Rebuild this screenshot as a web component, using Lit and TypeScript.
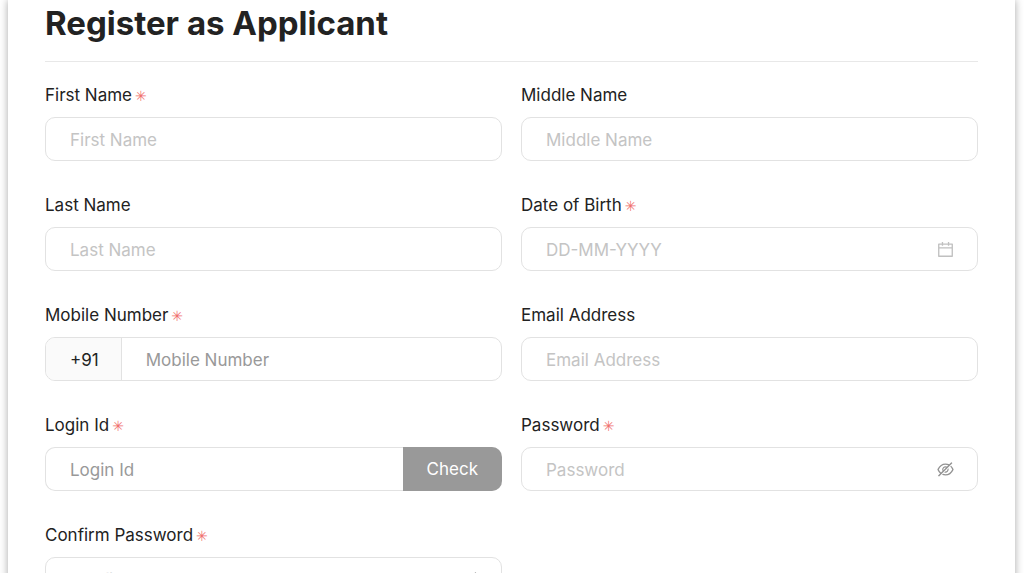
import { LitElement, html, css, svg, nothing } from "lit";
import { customElement, state } from "lit/decorators.js";

const calendarIcon = svg`<path d="M880 184H712v-64c0-4.4-3.6-8-8-8h-56c-4.4 0-8 3.6-8 8v64H384v-64c0-4.4-3.6-8-8-8h-56c-4.4 0-8 3.6-8 8v64H144c-17.7 0-32 14.3-32 32v664c0 17.7 14.3 32 32 32h736c17.7 0 32-14.3 32-32V216c0-17.7-14.3-32-32-32zm-40 656H184V460h656v380zM184 392V256h128v48c0 4.4 3.6 8 8 8h56c4.4 0 8-3.6 8-8v-48h256v48c0 4.4 3.6 8 8 8h56c4.4 0 8-3.6 8-8v-48h128v136H184z"/>`;

const eyeIcon = svg`<path d="M942.2 486.2Q889.47 375.11 816.7 305l-50.88 50.88C807.31 395.53 843.45 447.4 874.7 512 791.5 684.2 673.4 766 512 766q-72.67 0-133.87-22.38L323 798.75Q408 838 512 838q288.3 0 430.2-300.3a60.29 60.29 0 000-51.5zm-63.57-320.64L836 122.88a8 8 0 00-11.32 0L715.31 232.2Q624.86 186 512 186q-288.3 0-430.2 300.3a60.3 60.3 0 000 51.5q56.69 119.4 136.5 191.41L112.48 835a8 8 0 000 11.31L155.17 889a8 8 0 0011.31 0l712.15-712.12a8 8 0 000-11.32zM149.3 512C232.6 339.8 350.7 258 512 258c54.54 0 104.13 9.36 149.12 28.39l-70.3 70.3a176 176 0 00-238.13 238.13l-83.42 83.42C223.1 637.49 183.3 582.28 149.3 512zm246.7 0a112.11 112.11 0 01146.2-106.69L401.31 546.2A112 112 0 01396 512z"/><path d="M508 624c-3.46 0-6.87-.16-10.25-.47l-52.82 52.82a176.09 176.09 0 00227.42-227.42l-52.82 52.82c.31 3.38.47 6.79.47 10.25a111.94 111.94 0 01-112 112z"/>`;

interface Field {
  id: string;
  label: string;
  placeholder?: string;
  required?: boolean;
  kind?: "date" | "phone" | "check" | "password";
}

const fields: Field[] = [
  { id: "first-name", label: "First Name", required: true },
  { id: "middle-name", label: "Middle Name" },
  { id: "last-name", label: "Last Name" },
  { id: "dob", label: "Date of Birth", placeholder: "DD-MM-YYYY", required: true, kind: "date" },
  { id: "mobile", label: "Mobile Number", required: true, kind: "phone" },
  { id: "email", label: "Email Address" },
  { id: "login-id", label: "Login Id", required: true, kind: "check" },
  { id: "password", label: "Password", required: true, kind: "password" },
  { id: "confirm-password", label: "Confirm Password", required: true, kind: "password" },
];

@customElement("app-root")
export class AppRoot extends LitElement {
  @state() private shown: string[] = [];

  static styles = css`
    :host {
      display: block;
      height: 100vh;
      overflow: hidden;
      background: #fff;
      font-family: Inter, "Liberation Sans", sans-serif;
      font-size: 17px;
      line-height: 24px;
      color: #222;
    }
    * {
      box-sizing: border-box;
    }
    .card {
      margin: 0 9px 0 8px;
      padding: 0 37px 48px;
      background: #fff;
      box-shadow: 0 0 8px rgba(0, 0, 0, 0.35);
    }
    .title {
      margin: 0;
      padding-bottom: 14px;
      border-bottom: 1px solid #e8e8e8;
      font-size: 33px;
      line-height: 47px;
      font-weight: 700;
    }
    .grid {
      display: grid;
      grid-template-columns: 1fr 1fr;
      gap: 32px 19px;
      padding-top: 21px;
    }
    .label {
      display: flex;
      align-items: center;
      gap: 3px;
      margin-bottom: 10px;
    }
    .star {
      padding-top: 2px;
      font-family: "DejaVu Sans", sans-serif;
      font-size: 14px;
      line-height: 22px;
      color: #f0706e;
    }
    .control {
      display: flex;
      height: 44px;
      border: 1px solid #e2e2e2;
      border-radius: 10px;
      background: #fff;
    }
    .control:focus-within {
      border-color: #999;
    }
    .input {
      flex: 1;
      min-width: 0;
      padding: 2px 24px 0;
      border: 0;
      outline: 0;
      background: transparent;
      font: inherit;
      color: inherit;
    }
    .input::placeholder {
      color: #c4c4c4;
      opacity: 1;
    }
    .dark::placeholder {
      color: #999;
    }
    .prefix {
      display: flex;
      align-items: center;
      padding: 2px 22px 0 24px;
      border-right: 1px solid #e2e2e2;
      border-radius: 9px 0 0 9px;
      background: #fafafa;
    }
    .icon-button {
      display: flex;
      align-items: center;
      margin-right: 22px;
      padding: 0;
      border: 0;
      background: none;
      color: #929292;
      cursor: pointer;
    }
    .pale {
      color: #c0c0c0;
    }
    .icon {
      width: 19px;
      height: 19px;
      fill: currentColor;
    }
    .joined {
      border-right: 0;
    }
    .check {
      margin: -1px 0;
      padding: 0 24px;
      border: 0;
      border-radius: 0 10px 10px 0;
      background: #999;
      color: #fff;
      font: inherit;
      cursor: pointer;
    }
  `;

  private toggle(id: string) {
    this.shown = this.shown.includes(id)
      ? this.shown.filter((x) => x !== id)
      : [...this.shown, id];
  }

  private extra(f: Field) {
    if (f.kind === "check") return html`<button type="button" class="check">Check</button>`;
    if (f.kind === "date")
      return html`<button type="button" class="icon-button pale" aria-label="Choose date">
        <svg class="icon" viewBox="0 0 1024 1024">${calendarIcon}</svg>
      </button>`;
    if (f.kind === "password")
      return html`<button type="button" class="icon-button" aria-label="Toggle visibility" @click=${() => this.toggle(f.id)}>
        <svg class="icon" viewBox="0 0 1024 1024">${eyeIcon}</svg>
      </button>`;
    return nothing;
  }

  private field(f: Field) {
    const strong = f.kind === "phone" || f.kind === "check";
    const hidden = f.kind === "password" && !this.shown.includes(f.id);
    return html`<div class="field">
      <label class="label" for=${f.id}>${f.label}${f.required ? html`<span class="star">✳</span>` : nothing}</label>
      <div class="control ${f.kind === "check" ? "joined" : ""}">
        ${f.kind === "phone" ? html`<span class="prefix">+91</span>` : nothing}
        <input class="input ${strong ? "dark" : ""}" id=${f.id} type=${hidden ? "password" : "text"}
          placeholder=${f.placeholder ?? f.label} ?required=${f.required} />
        ${this.extra(f)}
      </div>
    </div>`;
  }

  render() {
    return html`<form class="card">
      <h1 class="title">Register as Applicant</h1>
      <div class="grid">${fields.map((f) => this.field(f))}</div>
    </form>`;
  }
}
